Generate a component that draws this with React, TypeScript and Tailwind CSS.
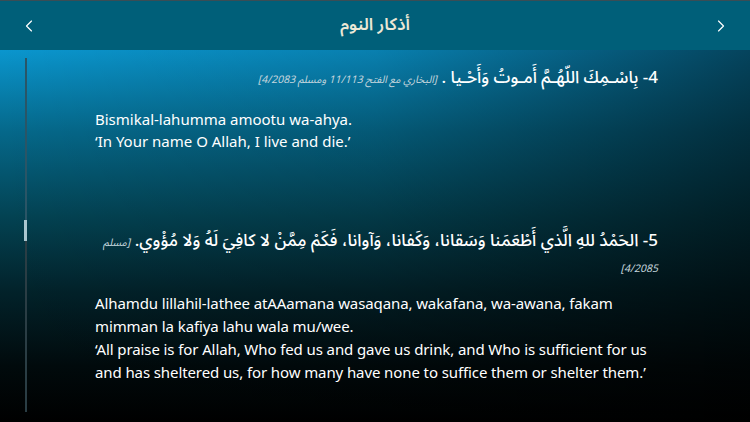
import { ChevronLeft, ChevronRight } from 'lucide-react';

const arabicFont = { fontFamily: '"Noto Sans Arabic", "DejaVu Sans", sans-serif' };

export default function App() {
  return (
    <div className="w-[750px] h-[422px] overflow-hidden bg-black flex flex-col font-['Noto_Sans',sans-serif]">
      {/* Header */}
      <div className="h-[50px] shrink-0 bg-[#005f79] border-t border-[#3a4d55] flex items-center justify-between px-[19px]">
        <ChevronLeft className="w-[20px] h-[20px] text-white" strokeWidth={1.4} />
        <h1 dir="rtl" className="text-[17px] font-semibold text-[#ece8d6]" style={arabicFont}>
          أذكار النوم
        </h1>
        <ChevronRight className="w-[20px] h-[20px] text-white" strokeWidth={1.4} />
      </div>

      {/* Body */}
      <div className="flex-1 flex bg-[linear-gradient(to_right,rgba(0,0,0,0)_0%,rgba(0,0,0,0.15)_50%,rgba(0,0,0,0.55)_100%),linear-gradient(to_bottom,#0a96ce_0%,#05688a_22%,#034252_45%,#02222a_65%,#010a0c_85%,#000_100%)]">
        {/* Scrollbar */}
        <div className="w-[95px] shrink-0 pl-[24px] pt-[8px] pb-[10px]">
          <div className="w-[3px] h-full flex flex-col items-center">
            <div className="w-[2px] h-[162px] bg-[#2a5566]" />
            <div className="w-[3px] h-[21px] bg-[#aac6cf]" />
            <div className="w-[2px] flex-1 bg-[#2a3d44]" />
          </div>
        </div>

        {/* Content */}
        <div className="w-[563px] pt-[16px] text-white">
          <p dir="rtl" className="text-[17px] leading-[24px] font-medium" style={arabicFont}>
            4- بِاسْـمِكَ اللّهُـمَّ أَمـوتُ وَأَحْـيا .{' '}
            <span className="text-[10.5px] italic font-normal text-[#c5d6dd]">
              [البخاري مع الفتح 11/113 ومسلم 4/2083]
            </span>
          </p>

          <div className="mt-[16px] text-[15px] leading-[22px] text-white">
            <p>Bismikal-lahumma amootu wa-ahya.</p>
            <p>‘In Your name O Allah, I live and die.’</p>
          </div>

          <p dir="rtl" className="mt-[77px] text-[17px] leading-[24px] font-medium" style={arabicFont}>
            5- الحَمْدُ للهِ الَّذي أَطْعَمَنا وَسَقانا، وَكَفانا، وَآوانا، فَكَمْ مِمَّنْ لا كافِيَ لَهُ وَلا مُؤْوي.{' '}
            <span className="text-[10.5px] italic font-normal text-[#c5d6dd]">[مسلم 4/2085]</span>
          </p>

          <div className="mt-[11px] text-[15px] leading-[23px] text-white tracking-[-0.1px]">
            <p>
              Alhamdu lillahil-lathee atAAamana wasaqana, wakafana, wa-awana, fakam mimman la kafiya lahu wala
              mu/wee.
            </p>
            <p>
              ‘All praise is for Allah, Who fed us and gave us drink, and Who is sufficient for us and has sheltered
              us, for how many have none to suffice them or shelter them.’
            </p>
          </div>
        </div>
      </div>
    </div>
  );
}
